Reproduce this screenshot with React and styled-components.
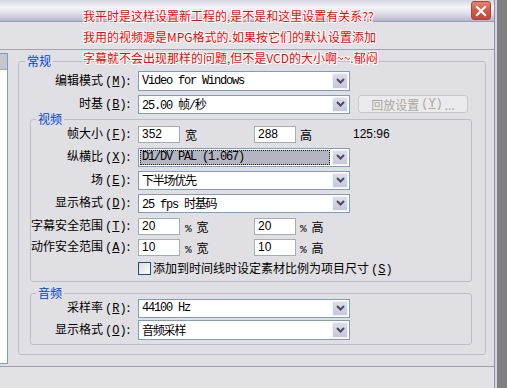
import styled, { createGlobalStyle } from 'styled-components';

const GlobalStyle = createGlobalStyle`
	html, body {
		margin: 0;
		padding: 0;
	}
	body {
		width: 507px;
		height: 388px;
		overflow: hidden;
		background: #808080;
		font-family: "Noto Sans CJK SC", sans-serif;
		font-size: 12px;
		color: #000;
	}
`;

export default function App() {
	return (
		<>
			<GlobalStyle />
			<Page>
				<Window>
					<TitleBar>
						<CloseButton>
							<svg width="12" height="12" viewBox="0 0 12 12">
								<path d="M2 2 L10 10 M10 2 L2 10" stroke="#fff" strokeWidth="2.2" strokeLinecap="square" />
							</svg>
						</CloseButton>
					</TitleBar>
					<Toolbar />
					<Content>
						<LeftList>
							<ListHead />
						</LeftList>
						<Group $width="468px">
							<Legend $lh="16px" $ml="6px">常规</Legend>
							<GroupBody $pad="2px 13px 9px 11px" $gap="3px">
								<Row>
									<Label $w="100px">编辑模式<Key>(<u>M</u>)</Key>:</Label>
									<Select value="Video for Windows" />
								</Row>
								<Row>
									<Label $w="100px">时基<Key>(<u>B</u>)</Key>:</Label>
									<Select value="25.00 帧/秒" $h="19px" />
									<DisabledButton>回放设置<Key>(<u>Y</u>)</Key>...</DisabledButton>
								</Row>
								<Group $mt="-4px">
									<Legend $lh="12px" $ml="5px">视频</Legend>
									<GroupBody $pad="0 0 3px 0" $gap="3px">
										<Row $mt="-1px">
											<Label $w="99px">帧大小<Key>(<u>F</u>)</Key>:</Label>
											<TextInput>352</TextInput>
											<Unit $w="74px" $pl="5px">宽</Unit>
											<TextInput>288</TextInput>
											<Unit $w="57px" $pl="4px">高</Unit>
											<Ratio>125:96</Ratio>
										</Row>
										<Row>
											<Label $w="99px">纵横比<Key>(<u>X</u>)</Key>:</Label>
											<Select value="D1/DV PAL (1.067)" $h="19px" $focus />
										</Row>
										<Row>
											<Label $w="99px">场<Key>(<u>E</u>)</Key>:</Label>
											<Select value="下半场优先" $h="19px" />
										</Row>
										<Row>
											<Label $w="99px">显示格式<Key>(<u>D</u>)</Key>:</Label>
											<Select value="25 fps 时基码" $h="19px" />
										</Row>
										<Row>
											<Label $w="99px">字幕安全范围<Key>(<u>T</u>)</Key>:</Label>
											<TextInput>20</TextInput>
											<Unit $w="74px" $pl="5px"><Pct>%</Pct>宽</Unit>
											<TextInput>20</TextInput>
											<Unit $w="57px" $pl="4px"><Pct>%</Pct>高</Unit>
										</Row>
										<Row $mt="-2px">
											<Label $w="99px">动作安全范围<Key>(<u>A</u>)</Key>:</Label>
											<TextInput>10</TextInput>
											<Unit $w="74px" $pl="5px"><Pct>%</Pct>宽</Unit>
											<TextInput>10</TextInput>
											<Unit $w="57px" $pl="4px"><Pct>%</Pct>高</Unit>
										</Row>
										<Row $mt="-2px">
											<Label $w="99px" />
											<CheckBox />
											<CheckText>添加到时间线时设定素材比例为项目尺寸<Key>(<u>S</u>)</Key></CheckText>
										</Row>
									</GroupBody>
								</Group>
								<Group $mt="2px">
									<Legend $lh="12px" $ml="5px">音频</Legend>
									<GroupBody $pad="0 0 4px 0" $gap="2px">
										<Row $mt="-1px">
											<Label $w="99px">采样率<Key>(<u>R</u>)</Key>:</Label>
											<Select value="44100 Hz" $h="19px" />
										</Row>
										<Row>
											<Label $w="99px">显示格式<Key>(<u>O</u>)</Key>:</Label>
											<Select value="音频采样" />
										</Row>
									</GroupBody>
								</Group>
							</GroupBody>
						</Group>
					</Content>
					<Footer />
					<Notes>
						<Note>我平时是这样设置新工程的,是不是和这里设置有关系??</Note>
						<Note>我用的视频源是MPG格式的.如果按它们的默认设置添加</Note>
						<Note>字幕就不会出现那样的问题,但不是VCD的大小啊~~.郁闷</Note>
					</Notes>
				</Window>
				<Edge />
				<Desk />
			</Page>
		</>
	);
}

function Select({ value, $h, $focus }) {
	return (
		<SelectBox $h={$h}>
			<SelectValue $focus={$focus}>{value}</SelectValue>
			<DropArrow>
				<svg width="9" height="6" viewBox="0 0 9 6">
					<path d="M1 1 L4.5 4.5 L8 1" fill="none" stroke="#4a4a62" strokeWidth="2" />
				</svg>
			</DropArrow>
		</SelectBox>
	);
}

const Page = styled.div`
	display: flex;
	height: 388px;
`;

const Window = styled.div`
	position: relative;
	width: 494px;
	display: flex;
	flex-direction: column;
	background: #e0dfe3;
	border-right: 1px solid #8e8ea6;
`;

const Edge = styled.div`
	width: 2px;
	background: #d4d4dc;
`;

const Desk = styled.div`
	flex: 1;
	background: #808080;
`;

const TitleBar = styled.div`
	height: 22px;
	display: flex;
	justify-content: flex-end;
	align-items: flex-start;
	padding: 1px 3px 0 0;
	box-sizing: border-box;
	background: linear-gradient(to bottom, #d6d6e0 0%, #f4f4f8 35%, #dedeea 65%, #b6b6cc 100%);
	border-bottom: 1px solid #9c9cb2;
`;

const CloseButton = styled.div`
	width: 20px;
	height: 19px;
	display: flex;
	align-items: center;
	justify-content: center;
	box-sizing: border-box;
	border: 1px solid #a0473c;
	border-radius: 3px;
	background: linear-gradient(to bottom, #e8806e 0%, #d65c4a 45%, #c4473a 100%);
`;

const Toolbar = styled.div`
	height: 27px;
	background: #e2e1e6;
	border-bottom: 1px solid #a4a4ac;
`;

const Content = styled.div`
	flex: 1;
	display: flex;
	align-items: flex-start;
	gap: 10px;
	padding: 3px 0 2px 0;
`;

const LeftList = styled.div`
	align-self: stretch;
	width: 7px;
	background: #fff;
	border: 1px solid #7f9db9;
	border-left: none;
`;

const ListHead = styled.div`
	height: 15px;
	background: #c6c6ce;
	border-bottom: 1px solid #a8a8b4;
`;

const Group = styled.fieldset`
	margin: ${({ $mt }) => $mt || '0'} 0 0 0;
	padding: 0;
	min-width: 0;
	width: ${({ $width }) => $width || 'auto'};
	box-sizing: border-box;
	border: 1px solid #bdbdc7;
	border-radius: 3px;
`;

const Legend = styled.legend`
	margin-left: ${({ $ml }) => $ml};
	padding: 0 2px;
	line-height: ${({ $lh }) => $lh};
	font-size: 12px;
	color: #0046d5;
`;

const GroupBody = styled.div`
	display: flex;
	flex-direction: column;
	gap: ${({ $gap }) => $gap};
	padding: ${({ $pad }) => $pad};
`;

const Row = styled.div`
	height: 20px;
	display: flex;
	align-items: center;
	margin-top: ${({ $mt }) => $mt || '0'};
`;

const Label = styled.div`
	width: ${({ $w }) => $w};
	margin-right: 8px;
	text-align: right;
	white-space: nowrap;
	line-height: 20px;
`;

const Key = styled.span`
	font-family: "Liberation Mono", monospace;
	font-size: 12px;
	margin-left: 2px;
	u {
		text-decoration-thickness: 1px;
		text-underline-offset: 1px;
	}
`;

const SelectBox = styled.div`
	width: 212px;
	height: ${({ $h }) => $h || '20px'};
	display: flex;
	box-sizing: border-box;
	border: 1px solid #7f9db9;
	background: #fff;
`;

const SelectValue = styled.div`
	flex: 1;
	display: flex;
	align-items: center;
	padding-left: ${({ $focus }) => ($focus ? '2px' : '3px')};
	margin: ${({ $focus }) => ($focus ? '1px' : '0')};
	background: ${({ $focus }) => ($focus ? '#b3b5c1' : 'transparent')};
	outline: ${({ $focus }) => ($focus ? '1px dotted #1a1a1a' : 'none')};
	outline-offset: -1px;
	font-family: "Liberation Mono", "Noto Sans CJK SC", monospace;
	font-size: 12px;
	letter-spacing: -1.2px;
	white-space: pre;
`;

const DropArrow = styled.div`
	width: 16px;
	margin: 1px;
	display: flex;
	align-items: center;
	justify-content: center;
	box-sizing: border-box;
	border: 1px solid #f2f2f8;
	border-radius: 1px;
	background: linear-gradient(to bottom, #dcdeea 0%, #c6c8d8 100%);
`;

const DisabledButton = styled.div`
	width: 110px;
	height: 18px;
	margin-left: 8px;
	display: flex;
	align-items: center;
	justify-content: center;
	box-sizing: border-box;
	border: 1px solid #c8c8c8;
	border-radius: 3px;
	background: #ebebee;
	color: #aca899;
	white-space: nowrap;
	${Key} {
		margin-right: 2px;
	}
`;

const TextInput = styled.div`
	width: 42px;
	height: 17px;
	box-sizing: border-box;
	border: 1px solid #a5acb2;
	background: #fff;
	padding-left: 3px;
	font-family: "Liberation Sans", sans-serif;
	font-size: 12px;
	line-height: 15px;
`;

const Unit = styled.div`
	width: ${({ $w }) => $w};
	padding-left: ${({ $pl }) => $pl};
	box-sizing: border-box;
	white-space: nowrap;
`;

const Pct = styled.span`
	font-family: "Liberation Mono", monospace;
	font-size: 11px;
	margin-right: 5px;
`;

const Ratio = styled.div`
	font-family: "Liberation Sans", sans-serif;
	font-size: 12px;
`;

const CheckBox = styled.div`
	width: 13px;
	height: 13px;
	box-sizing: border-box;
	border: 1px solid #1c5180;
	background: linear-gradient(135deg, #dcdcd7 0%, #fff 100%);
`;

const CheckText = styled.div`
	margin-left: 2px;
	white-space: nowrap;
`;

const Footer = styled.div`
	height: 21px;
	background: #e2e1e6;
	border-top: 1px solid #9e9ea8;
`;

const Notes = styled.div`
	position: absolute;
	top: 5px;
	left: 83px;
	display: flex;
	flex-direction: column;
	pointer-events: none;
`;

const Note = styled.div`
	line-height: 21px;
	font-size: 12px;
	color: #ff0000;
	white-space: nowrap;
	text-shadow:
		1px 0 #fff, -1px 0 #fff, 0 1px #fff, 0 -1px #fff,
		1px 1px #fff, -1px -1px #fff, 1px -1px #fff, -1px 1px #fff;
`;
